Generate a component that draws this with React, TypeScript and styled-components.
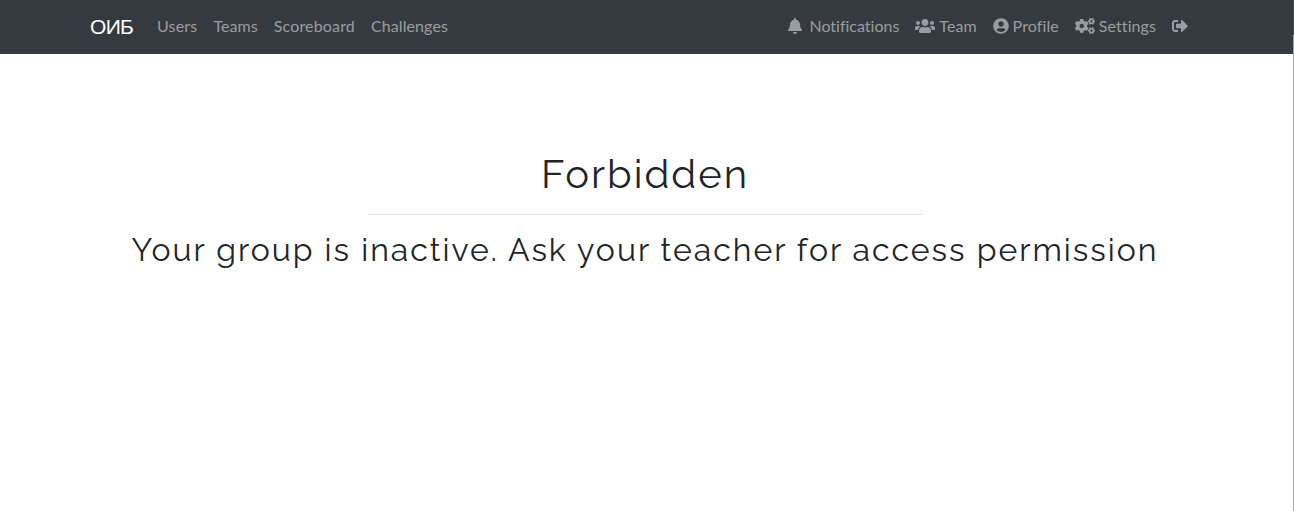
import React from "react";
import styled, { createGlobalStyle } from "styled-components";
import { FaBell, FaUsers, FaUserCircle, FaCogs, FaSignOutAlt } from "react-icons/fa";

const GlobalStyle = createGlobalStyle`
  *, *::before, *::after { box-sizing: border-box; }
  body {
    margin: 0;
    background: #fff;
    color: #212529;
    font-family: Lato, "Open Sans", sans-serif;
    font-size: 16px;
    line-height: 24px;
  }
`;

const Window = styled.div`
  height: 511px;
  overflow: hidden;
  display: flex;
`;

const Page = styled.div`
  flex: 1;
  min-width: 0;
`;

const WindowEdge = styled.div`
  width: 1px;
  background: linear-gradient(#484b4e 35px, #a3a3a3 35px);
`;

const Navbar = styled.nav`
  height: 54px;
  padding-left: 90px;
  background: #343a40;
  display: flex;
`;

const NavInner = styled.div`
  width: 1106px;
  display: flex;
  align-items: center;
`;

const Brand = styled.a`
  width: 43px;
  margin-right: 16px;
  color: #fff;
  font-family: "Liberation Sans", Arial, sans-serif;
  font-size: 21px;
  letter-spacing: -0.7px;
  line-height: 30px;
`;

const NavList = styled.ul<{ $end?: boolean }>`
  display: flex;
  list-style: none;
  padding: 0;
  margin: 0 0 0 ${(p) => (p.$end ? "auto" : "0")};
`;

const NavLink = styled.a<{ $tracking?: number }>`
  display: flex;
  align-items: center;
  height: 40px;
  padding: 7px 8px 9px;
  color: rgba(255, 255, 255, 0.5);
  letter-spacing: ${(p) => p.$tracking ?? 0}px;
  font-variant-ligatures: none;
  white-space: nowrap;
`;

const Icon = styled.span<{ $width: number; $gap: number }>`
  display: flex;
  width: ${(p) => p.$width}px;
  margin-right: ${(p) => p.$gap}px;
  svg { width: 100%; height: 16px; }
`;

const Message = styled.main`
  width: 1290px;
  padding-top: 96px;
  display: flex;
  flex-direction: column;
  align-items: center;
  font-family: Raleway, Lato, sans-serif;
  text-align: center;
`;

const Title = styled.h1`
  margin: 0;
  font-size: 40px;
  font-weight: 400;
  line-height: 48px;
  letter-spacing: 2px;
`;

const Divider = styled.hr`
  width: 555px;
  margin: 16px 0;
  border: 0;
  border-top: 1px solid #e5e5e5;
`;

const Subtitle = styled.h2`
  margin: 0;
  font-size: 32px;
  font-weight: 400;
  line-height: 38px;
  letter-spacing: 2px;
  white-space: nowrap;
`;

const links = [
  { label: "Users", tracking: 0.2 },
  { label: "Teams", tracking: 0.07 },
  { label: "Scoreboard", tracking: 0.15 },
  { label: "Challenges", tracking: 0.1 },
];
const account = [
  { label: "Notifications", icon: FaBell, width: 14, gap: 7, tracking: 0 },
  { label: "Team", icon: FaUsers, width: 20, gap: 4, tracking: 0.05 },
  { label: "Profile", icon: FaUserCircle, width: 16, gap: 4, tracking: 0.1 },
  { label: "Settings", icon: FaCogs, width: 20, gap: 4, tracking: 0.08 },
  { label: "", icon: FaSignOutAlt, width: 16, gap: 0, tracking: 0 },
];

export default function App() {
  return (
    <Window>
      <GlobalStyle />
      <Page>
        <Navbar>
          <NavInner>
            <Brand>ОИБ</Brand>
            <NavList>
              {links.map(({ label, tracking }) => (
                <li key={label}><NavLink $tracking={tracking}>{label}</NavLink></li>
              ))}
            </NavList>
            <NavList $end>
              {account.map(({ label, icon: Glyph, width, gap, tracking }) => (
                <li key={label}>
                  <NavLink $tracking={tracking}>
                    <Icon $width={width} $gap={gap}><Glyph /></Icon>
                    {label}
                  </NavLink>
                </li>
              ))}
            </NavList>
          </NavInner>
        </Navbar>
        <Message>
          <Title>Forbidden</Title>
          <Divider />
          <Subtitle>Your group is inactive. Ask your teacher for access permission</Subtitle>
        </Message>
      </Page>
      <WindowEdge />
    </Window>
  );
}
